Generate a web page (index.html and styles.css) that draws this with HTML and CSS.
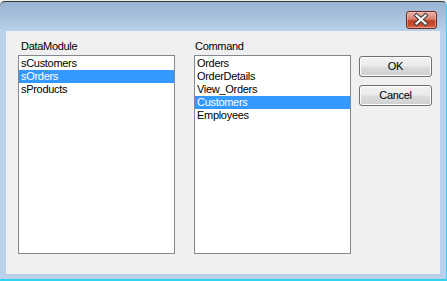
FILE: index.html
```html
<!DOCTYPE html>
<html lang="en">
<head>
  <meta charset="UTF-8">
  <title>Select Command</title>
  <link rel="stylesheet" href="styles.css">
</head>
<body>
  <div class="window">
    <!-- Title bar -->
    <div class="titlebar">
      <button class="close-btn" aria-label="Close">
        <svg width="31" height="18" viewBox="0 0 31 18" aria-hidden="true">
          <path d="M10.5 4.5 L19.5 12.5 M19.5 4.5 L10.5 12.5" stroke="#3b3b3b" stroke-width="4.2" stroke-linecap="square" fill="none"/>
          <path d="M10.5 4.5 L19.5 12.5 M19.5 4.5 L10.5 12.5" stroke="#ffffff" stroke-width="2.2" stroke-linecap="square" fill="none"/>
        </svg>
      </button>
    </div>

    <!-- Client area -->
    <div class="client">
      <div class="column">
        <div class="label label-module">DataModule</div>
        <div class="listbox" role="listbox" aria-label="DataModule">
          <div class="item">sCustomers</div>
          <div class="item selected">sOrders</div>
          <div class="item">sProducts</div>
        </div>
      </div>

      <div class="column">
        <div class="label label-command">Command</div>
        <div class="listbox" role="listbox" aria-label="Command">
          <div class="item">Orders</div>
          <div class="item">OrderDetails</div>
          <div class="item">View_Orders</div>
          <div class="item selected">Customers</div>
          <div class="item">Employees</div>
        </div>
      </div>

      <div class="buttons">
        <button class="dlg-button">OK</button>
        <button class="dlg-button">Cancel</button>
      </div>
    </div>
  </div>
</body>
</html>
```

FILE: styles.css
```css
/* Basic Reset */
* {
  margin: 0;
  padding: 0;
  box-sizing: border-box;
}

body {
  background-color: #ececec;
  font-family: "Liberation Sans", Arial, sans-serif;
  font-size: 11px;
  letter-spacing: -0.3px;
  color: #000;
  padding-top: 1px;
  width: 447px;
  height: 281px;
  overflow: hidden;
}

/* Window frame */
.window {
  width: 447px;
  height: 280px;
  border-top: 1px solid #3a3a3a;
  border-right: 1px solid #3fd0ee;
  border-bottom: 2px solid #2fd3f0;
  border-radius: 5px 5px 0 0;
  background: linear-gradient(to bottom, #98b3d1 0, #b9d1ea 30px, #b9d1ea 100%);
}

.titlebar {
  height: 29px;
  display: flex;
  justify-content: flex-end;
  align-items: flex-start;
  padding: 9px 9px 0 0;
}

.close-btn {
  width: 31px;
  height: 18px;
  border: 1px solid #6a2a22;
  border-radius: 3px;
  background: linear-gradient(to bottom, #eab0a2 0, #d98470 45%, #c5462c 52%, #c8472d 80%, #d8705a 100%);
  box-shadow: inset 0 0 0 1px rgba(255, 210, 200, 0.45);
  display: flex;
  align-items: center;
  justify-content: center;
  overflow: hidden;
}

.close-btn svg {
  display: block;
  flex: none;
}

/* Client area */
.client {
  margin-left: 6px;
  width: 434px;
  height: 243px;
  background-color: #f0f0f0;
  display: flex;
  padding: 9px 0 0 12px;
  gap: 19px;
}

.column {
  width: 157px;
  display: flex;
  flex-direction: column;
}

.label {
  height: 13px;
  line-height: 13px;
  margin-bottom: 2px;
}

.label-module { padding-left: 3px; }
.label-command { padding-left: 1px; }

.listbox {
  height: 199px;
  background-color: #fff;
  border: 1px solid #828790;
  padding-top: 1px;
}

.item {
  height: 13px;
  line-height: 13px;
  padding-left: 2px;
  white-space: nowrap;
}

.item.selected {
  background-color: #3399ff;
  color: #fff;
}

/* Dialog buttons */
.buttons {
  display: flex;
  flex-direction: column;
  gap: 8px;
  margin-top: 16px;
  margin-left: -11px;
}

.dlg-button {
  width: 73px;
  height: 21px;
  border: 1px solid #707070;
  border-radius: 3px;
  background: linear-gradient(to bottom, #f2f2f2 0, #ebebeb 48%, #dddddd 52%, #cfcfcf 100%);
  box-shadow: inset 0 0 0 1px #fcfcfc;
  font-family: inherit;
  font-size: 11px;
  letter-spacing: -0.3px;
  color: #000;
  line-height: 19px;
  text-align: center;
}
```
